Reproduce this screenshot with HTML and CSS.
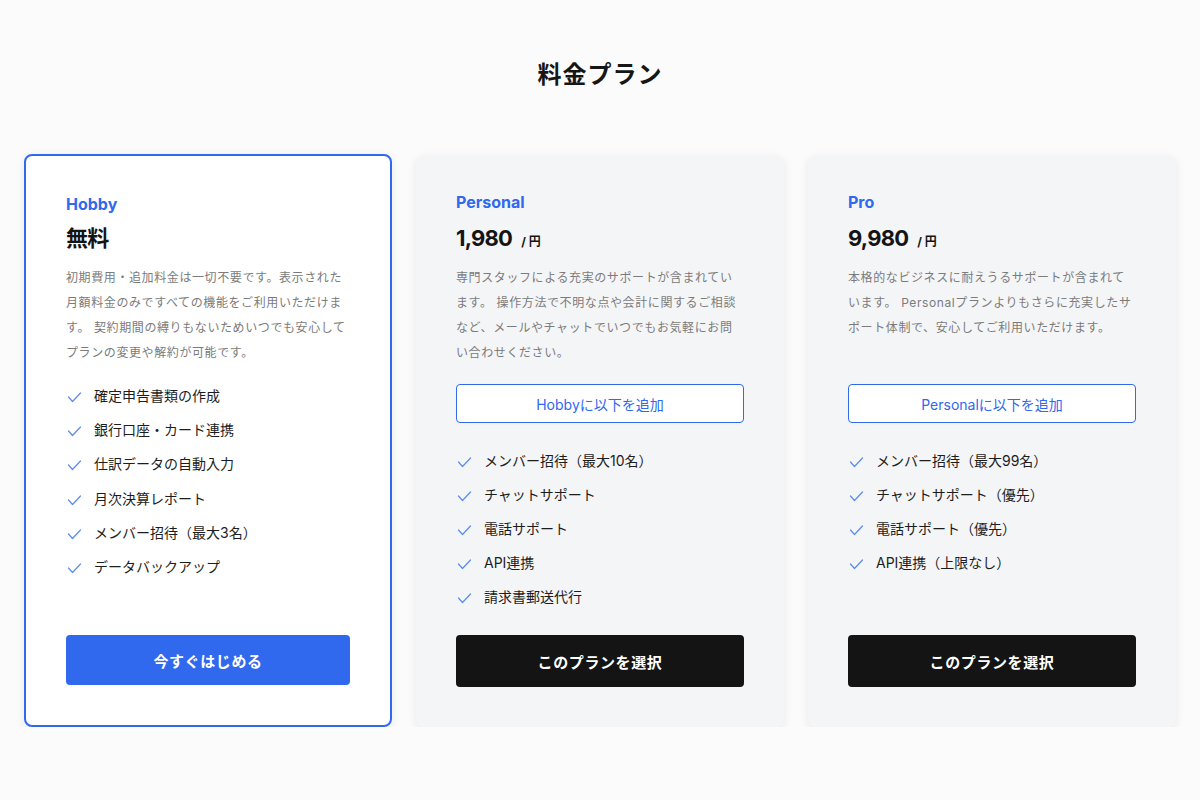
FILE: index.html
```html
<!DOCTYPE html>
<html lang="ja">
<head>
<meta charset="utf-8">
<title>料金プラン</title>
<link rel="stylesheet" href="styles.css">
</head>
<body>
<main class="page">
  <h1 class="title">料金プラン</h1>
  <div class="plans">
    <section class="card card--featured">
      <div class="plan-name">Hobby</div>
      <div class="price"><span class="price-value">無料</span></div>
      <p class="desc">初期費用・追加料金は一切不要です。表示された月額料金のみですべての機能をご利用いただけます。 契約期間の縛りもないためいつでも安心してプランの変更や解約が可能です。</p>
      <ul class="features features--first">
        <li><svg class="check" viewBox="0 0 16 16"><path d="M2.5 8 L6.5 12.5 L14.5 4"/></svg>確定申告書類の作成</li>
        <li><svg class="check" viewBox="0 0 16 16"><path d="M2.5 8 L6.5 12.5 L14.5 4"/></svg>銀行口座・カード連携</li>
        <li><svg class="check" viewBox="0 0 16 16"><path d="M2.5 8 L6.5 12.5 L14.5 4"/></svg>仕訳データの自動入力</li>
        <li><svg class="check" viewBox="0 0 16 16"><path d="M2.5 8 L6.5 12.5 L14.5 4"/></svg>月次決算レポート</li>
        <li><svg class="check" viewBox="0 0 16 16"><path d="M2.5 8 L6.5 12.5 L14.5 4"/></svg>メンバー招待（最大3名）</li>
        <li><svg class="check" viewBox="0 0 16 16"><path d="M2.5 8 L6.5 12.5 L14.5 4"/></svg>データバックアップ</li>
      </ul>
      <a class="btn btn--primary">今すぐはじめる</a>
    </section>

    <section class="card">
      <div class="plan-name">Personal</div>
      <div class="price"><span class="price-value">1,980</span><span class="price-unit">/ 円</span></div>
      <p class="desc">専門スタッフによる充実のサポートが含まれています。 操作方法で不明な点や会計に関するご相談など、メールやチャットでいつでもお気軽にお問い合わせください。</p>
      <a class="btn btn--outline">Hobbyに以下を追加</a>
      <ul class="features">
        <li><svg class="check" viewBox="0 0 16 16"><path d="M2.5 8 L6.5 12.5 L14.5 4"/></svg>メンバー招待（最大10名）</li>
        <li><svg class="check" viewBox="0 0 16 16"><path d="M2.5 8 L6.5 12.5 L14.5 4"/></svg>チャットサポート</li>
        <li><svg class="check" viewBox="0 0 16 16"><path d="M2.5 8 L6.5 12.5 L14.5 4"/></svg>電話サポート</li>
        <li><svg class="check" viewBox="0 0 16 16"><path d="M2.5 8 L6.5 12.5 L14.5 4"/></svg>API連携</li>
        <li><svg class="check" viewBox="0 0 16 16"><path d="M2.5 8 L6.5 12.5 L14.5 4"/></svg>請求書郵送代行</li>
      </ul>
      <a class="btn btn--dark">このプランを選択</a>
    </section>

    <section class="card">
      <div class="plan-name">Pro</div>
      <div class="price"><span class="price-value">9,980</span><span class="price-unit">/ 円</span></div>
      <p class="desc">本格的なビジネスに耐えうるサポートが含まれています。 Personalプランよりもさらに充実したサポート体制で、安心してご利用いただけます。</p>
      <a class="btn btn--outline">Personalに以下を追加</a>
      <ul class="features">
        <li><svg class="check" viewBox="0 0 16 16"><path d="M2.5 8 L6.5 12.5 L14.5 4"/></svg>メンバー招待（最大99名）</li>
        <li><svg class="check" viewBox="0 0 16 16"><path d="M2.5 8 L6.5 12.5 L14.5 4"/></svg>チャットサポート（優先）</li>
        <li><svg class="check" viewBox="0 0 16 16"><path d="M2.5 8 L6.5 12.5 L14.5 4"/></svg>電話サポート（優先）</li>
        <li><svg class="check" viewBox="0 0 16 16"><path d="M2.5 8 L6.5 12.5 L14.5 4"/></svg>API連携（上限なし）</li>
      </ul>
      <a class="btn btn--dark">このプランを選択</a>
    </section>
  </div>
</main>
</body>
</html>
```

FILE: styles.css
```css
* { box-sizing: border-box; }

html, body {
  margin: 0;
  padding: 0;
  background: #fbfbfb;
}

body {
  font-family: Inter, "Noto Sans CJK JP", sans-serif;
  color: #1a1a1a;
}

.page {
  padding: 59px 24px 0;
}

.title {
  margin: 0 0 63px;
  text-align: center;
  font-size: 24px;
  line-height: 32px;
  font-weight: 700;
  letter-spacing: 0.04em;
  color: #161616;
}

.plans {
  display: grid;
  grid-template-columns: repeat(3, 1fr);
  column-gap: 24px;
  align-items: stretch;
}

.card {
  display: flex;
  flex-direction: column;
  margin-top: 2px;
  padding: 40px;
  background: #f4f5f7;
  border-radius: 8px;
  box-shadow: 0 2px 10px rgba(0, 0, 0, 0.08);
}

.card--featured {
  margin-top: 0;
  background: #ffffff;
  border: 2px solid #3068ee;
}

.plan-name {
  font-size: 16px;
  line-height: 16px;
  font-weight: 700;
  color: #3068ee;
  margin-bottom: 12px;
}

.card:not(.card--featured) .plan-name {
  margin-top: -2px;
  margin-bottom: 14px;
}

.price {
  display: flex;
  align-items: baseline;
  height: 28px;
  line-height: 28px;
  margin-bottom: 13px;
  color: #141414;
}

.price-value {
  font-size: 22px;
  font-weight: 700;
  letter-spacing: -0.035em;
}

.price-unit {
  margin-left: 9px;
  font-size: 12px;
  font-weight: 700;
}

.desc {
  margin: 0 0 19px;
  min-height: 100px;
  font-size: 12px;
  line-height: 25px;
  letter-spacing: 0.05em;
  color: #7b7b7b;
}

.features {
  list-style: none;
  margin: 28px 0 28px;
  padding: 0;
  display: flex;
  flex-direction: column;
  gap: 14px;
}

.features--first {
  margin-top: 2px;
  gap: 14.2px;
}

.features li {
  display: flex;
  align-items: center;
  font-size: 14px;
  line-height: 20px;
  color: #1d1d1d;
}

.check {
  width: 16px;
  height: 16px;
  margin-right: 12px;
  flex: none;
  position: relative;
  top: 1px;
}

.check path {
  fill: none;
  stroke: #5b8af0;
  stroke-width: 1.2;
  stroke-linecap: round;
  stroke-linejoin: round;
}

.btn {
  display: flex;
  align-items: center;
  justify-content: center;
  border-radius: 4px;
  text-decoration: none;
  cursor: pointer;
}

.btn--outline {
  height: 39px;
  border: 1px solid #3068ee;
  background: #ffffff;
  color: #3068ee;
  font-size: 14px;
}

.btn--primary,
.btn--dark {
  margin-top: auto;
  color: #ffffff;
  font-size: 15px;
  font-weight: 700;
  letter-spacing: 0.04em;
}

.btn--primary {
  height: 50px;
  background: #3068ee;
}

.btn--dark {
  height: 52px;
  background: #141414;
}
```
